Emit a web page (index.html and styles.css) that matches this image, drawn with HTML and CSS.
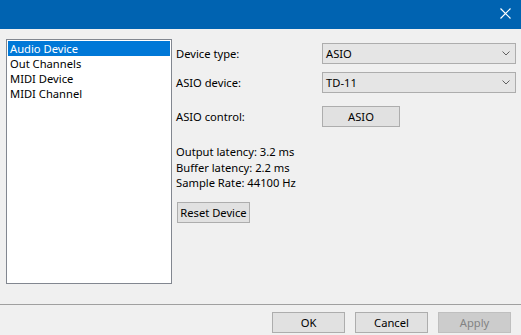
FILE: index.html
```html
<!DOCTYPE html>
<html lang="en">
<head>
    <meta charset="UTF-8">
    <meta name="viewport" content="width=device-width, initial-scale=1.0">
    <title>Audio Settings</title>
    <link rel="stylesheet" href="styles.css">
</head>
<body>

    <div class="ventana">
        <div class="titulo">
            <svg class="cerrar" width="11" height="11" viewBox="0 0 11 11">
                <path d="M0.5 0.5 L10.5 10.5 M10.5 0.5 L0.5 10.5" stroke="#fff" stroke-width="1.2" fill="none"/>
            </svg>
        </div>

        <div class="contenido">
            <div class="lista">
                <div class="item activo">Audio Device</div>
                <div class="item">Out Channels</div>
                <div class="item">MIDI Device</div>
                <div class="item">MIDI Channel</div>
            </div>

            <div class="panel">
                <div class="fila">
                    <span class="etiqueta">Device type:</span>
                    <div class="combo">
                        <span>ASIO</span>
                        <svg width="8" height="5" viewBox="0 0 8 5"><path d="M0.5 0.5 L4 4 L7.5 0.5" stroke="#606060" fill="none"/></svg>
                    </div>
                </div>
                <div class="fila segunda">
                    <span class="etiqueta">ASIO device:</span>
                    <div class="combo">
                        <span>TD-11</span>
                        <svg width="8" height="5" viewBox="0 0 8 5"><path d="M0.5 0.5 L4 4 L7.5 0.5" stroke="#606060" fill="none"/></svg>
                    </div>
                </div>
                <div class="fila tercera">
                    <span class="etiqueta">ASIO control:</span>
                    <button class="boton asio">ASIO</button>
                </div>

                <div class="info">
                    <div>Output latency: 3.2 ms</div>
                    <div>Buffer latency: 2.2 ms</div>
                    <div>Sample Rate: 44100 Hz</div>
                </div>

                <button class="boton reset">Reset Device</button>
            </div>
        </div>

        <div class="pie">
            <button class="boton">OK</button>
            <button class="boton">Cancel</button>
            <button class="boton desactivado">Apply</button>
        </div>
    </div>

</body>
</html>
```

FILE: styles.css
```css
body {
    margin: 0;
    font-family: "Segoe UI", "Noto Sans", sans-serif;
    font-size: 11.2px;
    color: #000;
    background-color: #f0f0f0;
}

.ventana {
    width: 521px;
    height: 335px;
    background-color: #f0f0f0;
    overflow: hidden;
}

.titulo {
    height: 29px;
    background-color: #0063b1;
    display: flex;
    justify-content: flex-end;
    align-items: flex-start;
    padding: 8px 10px 0 0;
    box-sizing: border-box;
}

.contenido {
    height: 275px;
    padding: 10px 0 0 6px;
    box-sizing: border-box;
    display: flex;
}

.lista {
    width: 166px;
    height: 245px;
    box-sizing: border-box;
    border: 1px solid #828790;
    background-color: #fff;
    padding: 1px;
}

.item {
    height: 15px;
    line-height: 15px;
    padding-left: 2px;
    white-space: nowrap;
}

.item.activo {
    background-color: #0078d7;
    color: #fff;
}

.panel {
    margin-left: 4px;
    padding-top: 4px;
    display: flex;
    flex-direction: column;
    align-items: flex-start;
}

.fila {
    display: flex;
    align-items: center;
    height: 21px;
}

.fila.segunda {
    margin-top: 8px;
}

.fila.tercera {
    margin-top: 13px;
}

.etiqueta {
    width: 146px;
}

.combo {
    width: 194px;
    height: 21px;
    box-sizing: border-box;
    border: 1px solid #adadad;
    background-color: #e5e5e5;
    display: flex;
    align-items: center;
    justify-content: space-between;
    padding: 0 5px 0 3px;
}

.boton {
    font-family: inherit;
    font-size: 11.2px;
    color: #000;
    height: 21px;
    width: 73px;
    box-sizing: border-box;
    border: 1px solid #adadad;
    background-color: #e1e1e1;
    padding: 0;
    margin: 0;
    white-space: nowrap;
}

.boton.asio {
    width: 78px;
}

.info {
    margin-top: 17px;
    line-height: 15.5px;
}

.boton.reset {
    margin-top: 11px;
    width: 73px;
    margin-left: 1px;
}

.pie {
    border-top: 1px solid #a0a0a0;
    display: flex;
    justify-content: flex-end;
    gap: 10px;
    padding: 7px 10px 0 0;
}

.boton.desactivado {
    background-color: #cccccc;
    border-color: #bfbfbf;
    color: #838383;
}
```
